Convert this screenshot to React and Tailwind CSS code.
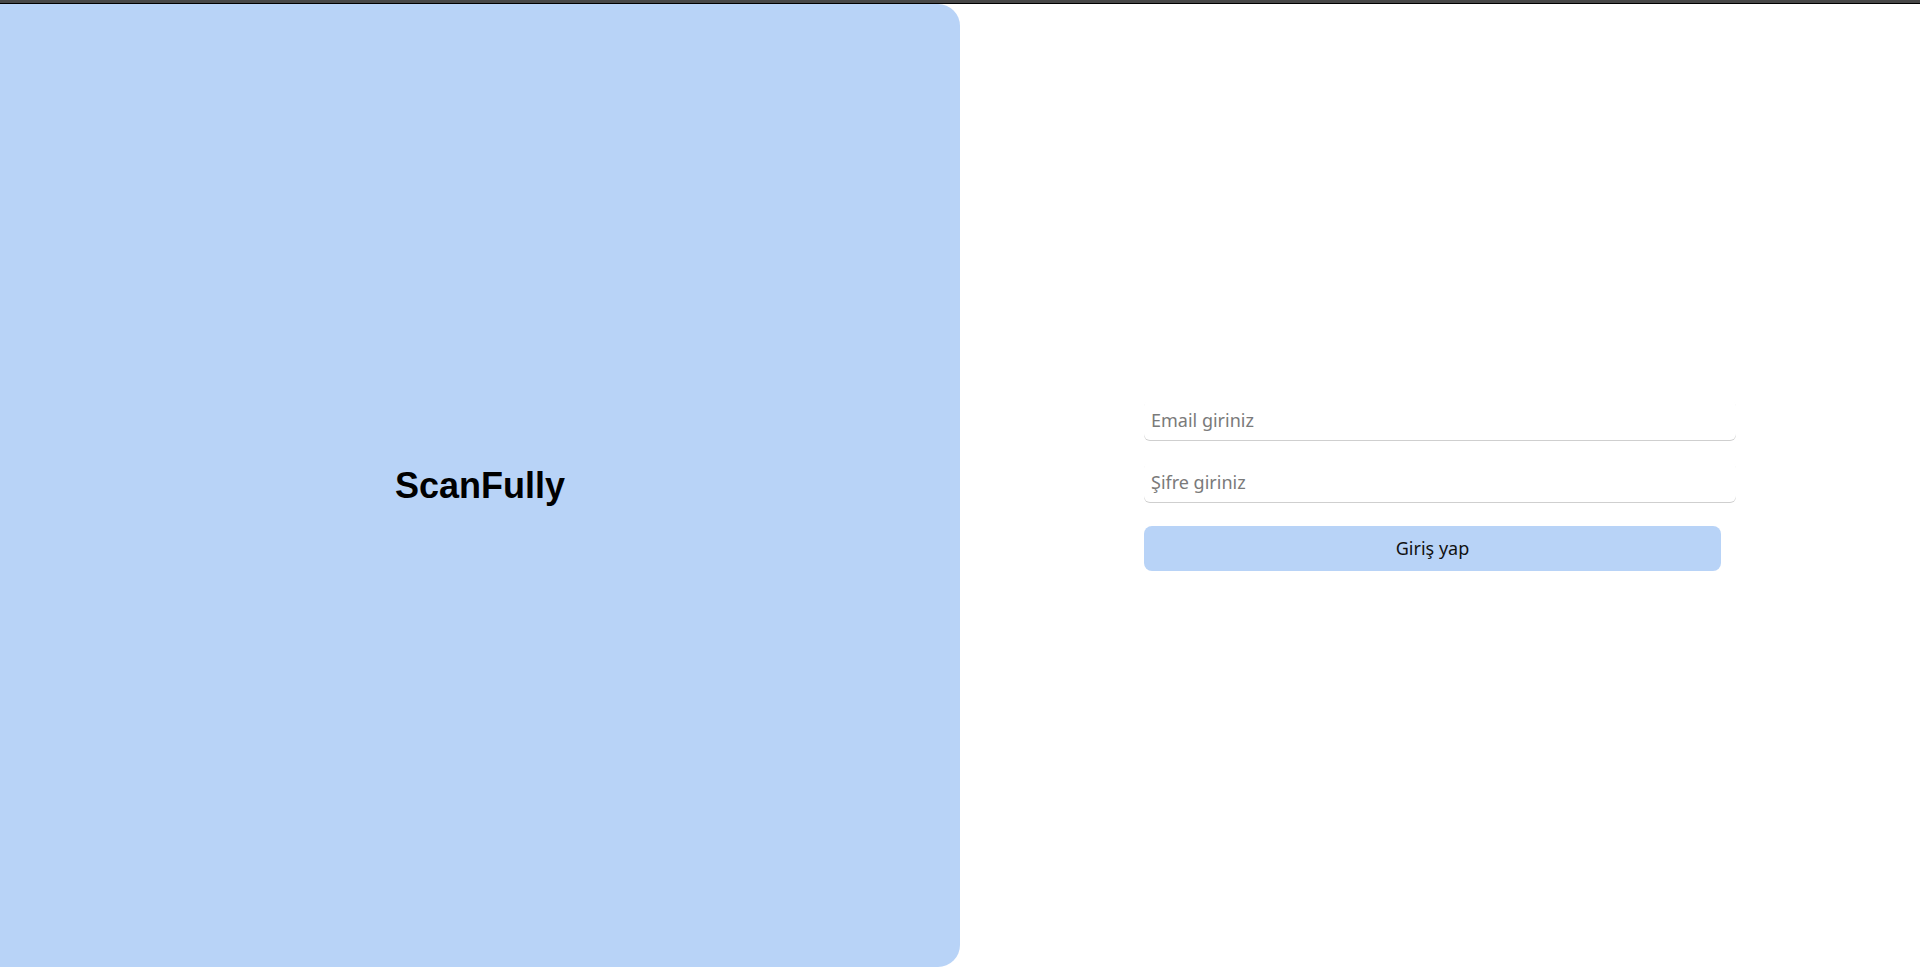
import React from "react";

function LoginForm() {
  return (
    <form className="flex flex-col w-[592px]" onSubmit={(e) => e.preventDefault()}>
      {/* Email */}
      <input
        type="email"
        placeholder="Email giriniz"
        className="h-10 w-full rounded-[6px] bg-white px-[7px] text-[18px] text-[#222] placeholder:text-[#7a7a7a] outline-none shadow-[0_1px_0_0_#cfcfcf]"
        style={{ fontFamily: '"Noto Sans", sans-serif' }}
      />

      {/* Password */}
      <input
        type="password"
        placeholder="Şifre giriniz"
        className="mt-[22px] h-10 w-full rounded-[6px] bg-white px-[7px] text-[18px] text-[#222] placeholder:text-[#7a7a7a] outline-none shadow-[0_1px_0_0_#cfcfcf]"
        style={{ fontFamily: '"Noto Sans", sans-serif' }}
      />

      {/* Submit */}
      <button
        type="submit"
        className="mt-6 h-[45px] w-[577px] rounded-[8px] bg-[#b8d3f7] text-[18px] text-[#111]"
        style={{ fontFamily: '"Noto Sans", sans-serif' }}
      >
        Giriş yap
      </button>
    </form>
  );
}

export default function App() {
  return (
    <div className="flex flex-col h-[967px] w-full bg-white">
      {/* Window top strip */}
      <div className="h-[3px] bg-[#474747]" />
      <div className="h-px bg-black" />

      <div className="flex flex-1">
        {/* Brand panel */}
        <div className="flex w-[960px] items-center justify-center rounded-r-[22px] bg-[#b8d3f7]">
          <h1
            className="text-[36px] font-bold text-black"
            style={{ fontFamily: '"Liberation Sans", Arial, sans-serif' }}
          >
            ScanFully
          </h1>
        </div>

        {/* Login side */}
        <div className="flex flex-1 items-center justify-center">
          <LoginForm />
        </div>
      </div>
    </div>
  );
}
